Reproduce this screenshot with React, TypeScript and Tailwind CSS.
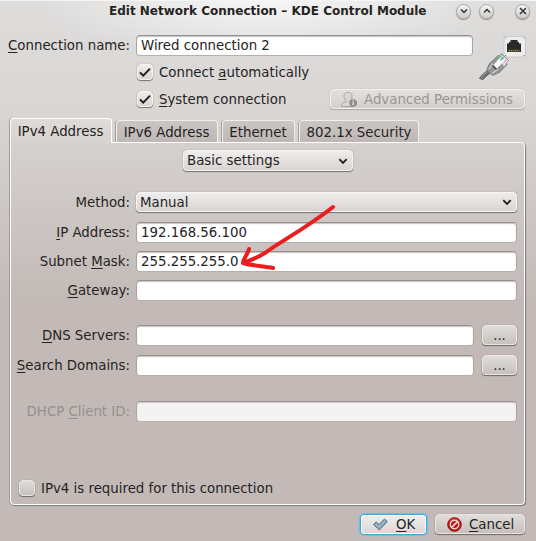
import type { ReactNode } from "react";

const raised =
  "rounded-[4px] border border-[#f5f4f3] bg-linear-to-b from-[#efeeed] to-[#d8d4d1] shadow-[0_1px_1px_#777270,0_0_1px_#8d8784]";
const raisedDark =
  "rounded-[4px] border border-[#e9e6e4] bg-linear-to-b from-[#e0ddda] to-[#c6c1bc] shadow-[0_1px_1px_#6f6967,0_0_1px_#807977]";

function Key({ children }: { children: ReactNode }) {
  return <span className="underline decoration-1 underline-offset-2">{children}</span>;
}

function Chevron() {
  return (
    <svg width="10" height="8" viewBox="0 0 10 8" fill="none" stroke="#222" strokeWidth="1.9">
      <path d="M1.3 2.2 5 5.9 8.7 2.2" />
    </svg>
  );
}

function Field({ className = "", value = "", disabled = false }: { className?: string; value?: string; disabled?: boolean }) {
  return (
    <div
      className={`h-[21px] rounded-[4px] border border-x-[#aaa4a2] border-t-[#96908e] border-b-[#b5b0ad] pl-[4px] leading-[19px] ${
        disabled ? "bg-[#f3f3f3] shadow-[inset_0_1px_1px_#d0cecd]" : "bg-white shadow-[inset_0_1px_1px_#c6c4c3]"
      } ${className}`}
    >
      {value}
    </div>
  );
}

function Row({ label, children, className = "" }: { label: ReactNode; children: ReactNode; className?: string }) {
  return (
    <div className={`flex h-[21px] ${className}`}>
      <div className="w-[119px] shrink-0 text-right leading-[21px]">{label}</div>
      <div className="ml-[6px] flex w-[382px] justify-between">{children}</div>
    </div>
  );
}

function Check({ on = false }: { on?: boolean }) {
  return (
    <div className={`flex size-[16px] items-center justify-center ${on ? raised : raisedDark}`}>
      {on && (
        <svg width="12" height="11" viewBox="0 0 12 11" fill="none" stroke="#1e1e1e" strokeWidth="2">
          <path d="M1 5.4 4.2 8.6 11 1.6" />
        </svg>
      )}
    </div>
  );
}

function WindowButton({ kind }: { kind: "down" | "up" | "close" }) {
  return (
    <div className="flex size-[15px] items-center justify-center rounded-full border border-[#aaa7a5] bg-linear-to-b from-[#f5f5f4] to-[#cfccca] shadow-[0_1px_1px_#8c8886]">
      {kind === "close" ? (
        <svg width="8" height="8" viewBox="0 0 8 8" stroke="#333" strokeWidth="1.5">
          <path d="M1 1 7 7M7 1 1 7" />
        </svg>
      ) : (
        <svg width="8" height="6" viewBox="0 0 8 6" fill="none" stroke="#333" strokeWidth="1.5">
          <path d={kind === "up" ? "M1 4.5 4 1.5 7 4.5" : "M1 1.5 4 4.5 7 1.5"} />
        </svg>
      )}
    </div>
  );
}

function EthernetIcon() {
  return (
    <svg className="absolute top-[34px] left-[479px]" width="48" height="48" viewBox="479 34 48 48">
      <rect x="504" y="36.500" width="21.500" height="20.500" fill="#ececec" stroke="#cbcac9" />
      <path d="M505 38h1M523.500 38h1M505 55.500h1M523.500 55.500h1" stroke="#777" />
      <path d="M507 52V43.500h2V42h1.500v-2h7v2h1.500v1.500h2V52z" fill="#292929" />
      <path d="M508 49.500h12V52h-12z" fill="#4c4835" />
      <path d="M509 50.500h10" stroke="#a18d37" strokeDasharray="1 1" />
      <path d="M481 79.500c1-3 4-4 8-8" stroke="#6a6a6a" strokeWidth="4.500" fill="none" />
      <path d="M481 78c1-2 3-3 6-6" stroke="#aaa" fill="none" />
      <path d="M486.500 70 489.500 63.500 498 55.500 499.500 56 501.500 53.500 508.500 60.500 506.500 62.500 507 64.500 499.500 72.500 492.500 75.500z" fill="#969696" stroke="#707070" strokeWidth=".7" />
      <path d="m498.500 57 3-2.800 6.500 6.300-4 6z" fill="#e4e4e4" />
      <path d="m493.500 65 6.500-7.500 4 4-7.500 7z" fill="#fff" />
      <path d="m489 69 4-5.500M492 73.500l6-4.500" stroke="#d3d3d3" strokeWidth="1.200" />
      <path d="m492.500 65.500 4 4" stroke="#404040" strokeWidth="1.500" />
      <path d="m498.500 58.500 3-3" stroke="#42c75d" strokeWidth="1.300" />
      <path d="m500.500 60.500 3-3.500" stroke="#5689e8" strokeWidth="1.300" />
      <path d="m503.500 63 2.500-3" stroke="#ecaaa7" strokeWidth="1.200" />
    </svg>
  );
}

function Tab({ children, className }: { children: ReactNode; className: string }) {
  return (
    <div
      className={`h-[22px] rounded-t-[4px] border border-b-0 border-[#f1efee] bg-linear-to-b from-[#cbc6c4] to-[#beb7b4] text-center leading-[23px] shadow-[-1px_0_0_#a39e9b] ${className}`}
    >
      {children}
    </div>
  );
}

export default function App() {
  return (
    <div className="relative flex h-[541px] w-[536px] flex-col overflow-hidden bg-[radial-gradient(ellipse_230px_60px_at_50%_0px,#f6f6f6,#f6f6f600),linear-gradient(180deg,#dedddc_0px,#dad7d5_100px,#c3bab7_300px,#c3bab7_100%)] font-['DejaVu_Sans',sans-serif] text-[13.333px] whitespace-nowrap text-[#262423]">
      <div className="flex h-[21px] shrink-0 items-center border-t border-[#f5f5f5] pr-[6px]">
        <div className="ml-[109px] w-[348px] text-[12px] leading-[20px] font-bold">Edit Network Connection – KDE Control Module</div>
        <WindowButton kind="down" />
        <div className="ml-[8px]"><WindowButton kind="up" /></div>
        <div className="ml-[21px]"><WindowButton kind="close" /></div>
      </div>

      <div className="mt-[14px] flex h-[21px] shrink-0">
        <div className="w-[130px] text-right leading-[21px]"><Key>C</Key>onnection name:</div>
        <Field className="ml-[6px] w-[337px]" value="Wired connection 2" />
      </div>
      <div className="mt-[8px] ml-[137px] flex h-[16px] shrink-0 items-center">
        <Check on />
        <div className="ml-[6px] leading-[17px]">Connect <Key>a</Key>utomatically</div>
      </div>
      <div className="mt-[9px] flex h-[20px] shrink-0 pr-[11px] pl-[137px]">
        <div className="mt-[2px]"><Check on /></div>
        <div className="mt-[2px] ml-[6px] leading-[18px]"><Key>S</Key>ystem connection</div>
        <div className="ml-auto flex h-[20px] w-[195px] items-center rounded-[4px] border border-[#f2f0ef] bg-linear-to-b from-[#e3e1df] to-[#d3cfcc] pl-[9px] text-[#9b9694] shadow-[0_1px_1px_#aaa6a3,0_0_1px_#aaa6a3]">
          <svg width="18" height="17" viewBox="0 0 18 17">
            <path d="M4 5c0-5 8-5 8 0 0 2-.5 3.500-2 4.500v1.500c2 .5 4 1 4 4.500H1.500C1.500 12 3 11.500 6 11V9.500C4.500 8.500 4 7 4 5z" fill="#d8d6d4" stroke="#a9a5a2" />
            <circle cx="13.200" cy="12" r="3.800" fill="#8d8b89" />
            <path d="M13.200 9.200v1.300M13.200 11.300v3" stroke="#e5e3e1" strokeWidth="1.500" />
          </svg>
          <span className="ml-[6px] leading-[19px]">Advanced Permissions</span>
        </div>
      </div>

      <div className="relative z-1 mt-[9px] ml-[10px] flex h-[25px] shrink-0 items-start">
        <div className="h-[25px] w-[102px] rounded-t-[4px] border border-b-0 border-white bg-linear-to-b from-[#dedbd9] to-[#d6d3d0] pr-px text-center leading-[25px] shadow-[-1px_0_0_#a39e9b]">
          IPv4 Address
        </div>
        <Tab className="mt-[2px] ml-[4px] w-[102px] pr-px">IPv6 Address</Tab>
        <Tab className="mt-[2px] ml-[4px] w-[73px] pr-px">Ethernet</Tab>
        <Tab className="mt-[2px] ml-[4px] w-[120px]">802.1x Security</Tab>
      </div>
      <div className="-mt-px ml-[10px] flex h-[363px] w-[515px] shrink-0 flex-col rounded-[4px] rounded-tl-none border border-white shadow-[1px_1px_1px_#7f7977,-1px_0_0_#a39e9b]">
        <div className={`mt-[7px] ml-[172px] flex h-[21px] w-[170px] shrink-0 items-center justify-between pr-[4px] pl-[3px] leading-[18px] ${raised}`}>
          Basic settings <Chevron />
        </div>
        <Row className="mt-[21px]" label="Method:">
          <div className={`flex h-[20px] w-[381px] items-center justify-between pr-[4px] pl-[3px] leading-[17px] ${raised}`}>
            Manual <Chevron />
          </div>
        </Row>
        <Row className="mt-[9px]" label={<><Key>I</Key>P Address:</>}>
          <Field className="w-[381px]" value="192.168.56.100" />
        </Row>
        <Row className="mt-[8px]" label={<>Subnet <Key>M</Key>ask:</>}>
          <Field className="w-[381px]" value="255.255.255.0" />
        </Row>
        <Row className="mt-[8px]" label={<><Key>G</Key>ateway:</>}>
          <Field className="w-[381px]" />
        </Row>
        <Row className="mt-[24px]" label={<><Key>D</Key>NS Servers:</>}>
          <Field className="w-[338px]" />
          <div className={`mr-px h-[20px] w-[35px] text-center leading-[20px] ${raisedDark}`}>...</div>
        </Row>
        <Row className="mt-[9px]" label={<><Key>S</Key>earch Domains:</>}>
          <Field className="w-[338px]" />
          <div className={`mr-px h-[20px] w-[35px] text-center leading-[20px] ${raisedDark}`}>...</div>
        </Row>
        <Row className="mt-[25px]" label={<span className="text-[#94908d]">DHCP <Key>C</Key>lient ID:</span>}>
          <Field className="w-[381px]" disabled />
        </Row>
        <div className="mt-[58px] ml-[8px] flex h-[16px] items-center">
          <Check />
          <span className="ml-[6px] leading-[17px]">IPv4 is required for this connection</span>
        </div>
      </div>

      <div className="mt-[9px] flex shrink-0 justify-end pr-[11px]">
        <div className="flex h-[21px] w-[67px] items-center rounded-[4px] border border-[#43a6db] bg-linear-to-b from-[#efefee] to-[#dad6d3] pl-[12px] shadow-[0_0_1px_1px_#71bce3,inset_0_0_0_1px_#fff]">
          <svg width="15" height="13" viewBox="0 0 15 13">
            <path d="M.6 6.500 3.200 4 6 6.500l5.500-5.500 2.900 2.500L6.300 12z" fill="#86a4bb" stroke="#587487" />
            <path d="m3 6 3.200 3L12 3" fill="none" stroke="#b3cbdc" />
          </svg>
          <span className="ml-[8px] leading-[19px]"><Key>O</Key>K</span>
        </div>
        <div className={`ml-[8px] flex h-[20px] w-[90px] items-center pl-[11px] ${raisedDark}`}>
          <svg width="15" height="15" viewBox="0 0 15 15">
            <circle cx="7.500" cy="7.500" r="6.800" fill="#c41616" stroke="#8e1010" />
            <circle cx="7.500" cy="7.500" r="4.200" fill="none" stroke="#efdcda" strokeWidth="1.400" />
            <path d="m4.500 10.500 6-6" stroke="#efdcda" strokeWidth="1.700" />
            <path d="M2.500 5c2-4 8-4 10 0" fill="none" stroke="#e16c68" strokeWidth=".7" />
          </svg>
          <span className="ml-[7px] leading-[19px]"><Key>C</Key>ancel</span>
        </div>
      </div>

      <EthernetIcon />
      <svg className="absolute inset-0 z-10" width="536" height="541" viewBox="0 0 536 541" fill="none" stroke="#e91e1e" strokeWidth="4" strokeLinecap="round" strokeLinejoin="round">
        <path d="M333 207C305 229 278 243 265 253Q255 259 243 263M249 249C248 254 243 259 243 263C253 266 263 266 273 268" />
      </svg>
    </div>
  );
}
